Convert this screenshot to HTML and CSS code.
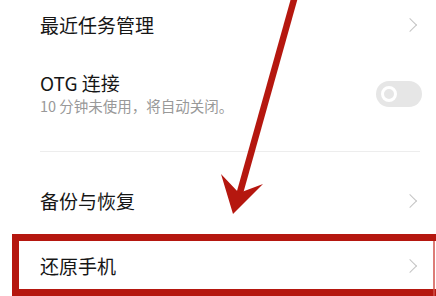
FILE: index.html
```html
<html>
  <head>
    <meta charset="utf-8">
    <link rel="stylesheet" href="styles.css">
  </head>
  <body>
    <div class="screen">
      <div class="row row-first">
        <span class="title">最近任务管理</span>
        <span class="chevron"></span>
      </div>
      <div class="row row-otg">
        <div class="text">
          <div class="title">OTG 连接</div>
          <div class="sub">10 分钟未使用，将自动关闭。</div>
        </div>
        <div class="toggle"><span class="knob"></span></div>
      </div>
      <div class="divider"></div>
      <div class="row row-backup">
        <span class="title">备份与恢复</span>
        <span class="chevron"></span>
      </div>
      <div class="row row-reset">
        <span class="title">还原手机</span>
        <span class="chevron"></span>
      </div>

      <svg class="marks" width="436" height="296" viewBox="0 0 436 296">
        <line x1="295" y1="-4" x2="239" y2="196" stroke="#b5170f" stroke-width="6.5" />
        <polygon points="233,214 221,174 239,193 263,184" fill="#b5170f" />
        <path d="M436 237.5 H15.5 V292.5 H436" fill="none" stroke="#b5170f" stroke-width="7" />
        <line x1="434" y1="241" x2="434" y2="296" stroke="#d2504a" stroke-width="1.5" />
      </svg>
    </div>
  </body>
</html>
```

FILE: styles.css
```css
body {
  margin: 0;
  background: #ffffff;
  font-family: "Noto Sans CJK SC", "Noto Sans", sans-serif;
  color: #161616;
}
.screen {
  position: relative;
  width: 436px;
  height: 296px;
  overflow: hidden;
}
.row {
  display: flex;
  align-items: center;
  justify-content: space-between;
  height: 50px;
  padding: 0 17px 0 40px;
}
.title {
  font-size: 19px;
  line-height: 26px;
}
.sub {
  margin-top: 1px;
  font-size: 14.5px;
  line-height: 18px;
  color: #999999;
}
.row-otg {
  height: auto;
  padding-top: 20px;
  padding-bottom: 36px;
}
.chevron {
  width: 9px;
  height: 9px;
  margin-right: 4px;
  border-top: 1.5px solid #c4c4c4;
  border-right: 1.5px solid #c4c4c4;
  transform: rotate(45deg);
}
.toggle {
  display: flex;
  align-items: center;
  width: 46px;
  height: 26px;
  margin-top: 2px;
  margin-right: -3px;
  padding-left: 5px;
  box-sizing: border-box;
  border-radius: 13px;
  background: #e6e6e6;
}
.knob {
  width: 10px;
  height: 10px;
  border: 3px solid #ffffff;
  border-radius: 50%;
}
.divider {
  height: 1px;
  margin: 0 16px 0 40px;
  background: #ededed;
}
.row-backup {
  margin-top: 24px;
}
.row-reset {
  margin-top: 15px;
}
.marks {
  position: absolute;
  left: 0;
  top: 0;
}
```
